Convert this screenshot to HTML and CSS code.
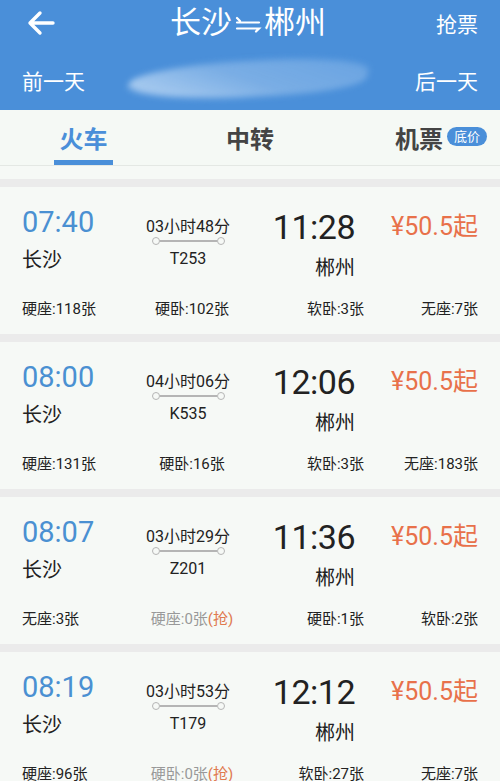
FILE: index.html
```html
<!DOCTYPE html>
<html>
  <head>
    <title>长沙-郴州</title>
    <link rel="stylesheet" href="styles.css">
  </head>
  <body>
    <div class="topbar">
      <div class="nav">
        <svg class="back" width="30" height="26" viewBox="0 0 30 26">
          <path d="M27 13H4M14 3L4 13l10 10" fill="none" stroke="#fff" stroke-width="3.4" stroke-linecap="round" stroke-linejoin="round"/>
        </svg>
        <div class="title">
          长沙<svg class="swap" width="28" height="20" viewBox="0 0 28 20"><path d="M6 6l-3-3M3 7.5h22M3 13.5h22l-3 3" fill="none" stroke="#fff" stroke-width="2.2" stroke-linecap="round"/></svg>郴州
        </div>
        <div class="nav-right">抢票</div>
      </div>
      <div class="dayrow">
        <span>前一天</span>
        <div class="smudge"></div>
        <span>后一天</span>
      </div>
    </div>

    <div class="tabs">
      <div class="tab active">火车</div>
      <div class="tab">中转</div>
      <div class="tab last">机票<span class="badge">底价</span></div>
    </div>

    <div class="list">
      <div class="card">
        <div class="main">
          <div class="dep">
            <div class="dep-time">07:40</div>
            <div class="station">长沙</div>
          </div>
          <div class="mid">
            <div class="dur">03小时48分</div>
            <div class="track"><i></i><b></b><i></i></div>
            <div class="code">T253</div>
          </div>
          <div class="arr">
            <div class="arr-time">11:28</div>
            <div class="station">郴州</div>
          </div>
          <div class="price">¥50.5起</div>
        </div>
        <div class="seats">
          <span>硬座:118张</span>
          <span>硬卧:102张</span>
          <span>软卧:3张</span>
          <span>无座:7张</span>
        </div>
      </div>

      <div class="card">
        <div class="main">
          <div class="dep">
            <div class="dep-time">08:00</div>
            <div class="station">长沙</div>
          </div>
          <div class="mid">
            <div class="dur">04小时06分</div>
            <div class="track"><i></i><b></b><i></i></div>
            <div class="code">K535</div>
          </div>
          <div class="arr">
            <div class="arr-time">12:06</div>
            <div class="station">郴州</div>
          </div>
          <div class="price">¥50.5起</div>
        </div>
        <div class="seats">
          <span>硬座:131张</span>
          <span>硬卧:16张</span>
          <span>软卧:3张</span>
          <span>无座:183张</span>
        </div>
      </div>

      <div class="card">
        <div class="main">
          <div class="dep">
            <div class="dep-time">08:07</div>
            <div class="station">长沙</div>
          </div>
          <div class="mid">
            <div class="dur">03小时29分</div>
            <div class="track"><i></i><b></b><i></i></div>
            <div class="code">Z201</div>
          </div>
          <div class="arr">
            <div class="arr-time">11:36</div>
            <div class="station">郴州</div>
          </div>
          <div class="price">¥50.5起</div>
        </div>
        <div class="seats">
          <span>无座:3张</span>
          <span class="none">硬座:0张<em>(抢)</em></span>
          <span>硬卧:1张</span>
          <span>软卧:2张</span>
        </div>
      </div>

      <div class="card">
        <div class="main">
          <div class="dep">
            <div class="dep-time">08:19</div>
            <div class="station">长沙</div>
          </div>
          <div class="mid">
            <div class="dur">03小时53分</div>
            <div class="track"><i></i><b></b><i></i></div>
            <div class="code">T179</div>
          </div>
          <div class="arr">
            <div class="arr-time">12:12</div>
            <div class="station">郴州</div>
          </div>
          <div class="price">¥50.5起</div>
        </div>
        <div class="seats">
          <span>硬座:96张</span>
          <span class="none">硬卧:0张<em>(抢)</em></span>
          <span>软卧:27张</span>
          <span>无座:7张</span>
        </div>
      </div>
    </div>
  </body>
</html>
```

FILE: styles.css
```css
body {
  margin: 0;
  font-family: Roboto, "Noto Sans CJK SC", sans-serif;
  background: #f6f9f6;
  color: #222;
  overflow: hidden;
}

/* header */
.topbar {
  background: #4a8fd9;
  color: #fff;
  height: 110px;
}
.nav {
  height: 46px;
  display: flex;
  align-items: center;
  justify-content: space-between;
  padding: 0 22px 0 26px;
}
.back {
  display: block;
}
.title {
  font-size: 31px;
  line-height: 40px;
  display: flex;
  align-items: center;
  margin-left: 4px;
}
.swap {
  margin: 4px 2px 0;
}
.nav-right {
  font-size: 21px;
}
.dayrow {
  height: 64px;
  display: flex;
  align-items: center;
  justify-content: space-between;
  padding: 0 22px;
  font-size: 21px;
}
.dayrow span {
  margin-top: 4px;
}
.smudge {
  width: 240px;
  height: 36px;
  margin: 2px 12px 0 8px;
  border-radius: 50% 45% 40% 55%;
  background: linear-gradient(20deg, rgba(220, 236, 252, 0.75), rgba(160, 198, 238, 0.55) 50%, rgba(140, 186, 236, 0.45));
  transform: rotate(-3deg) skewX(-12deg);
  filter: blur(3px);
}

/* tabs */
.tabs {
  display: grid;
  grid-template-columns: 167px 166px 167px;
  height: 55px;
  border-bottom: 1px solid #e4e8e4;
  background: #f5f9f5;
}
.tab {
  display: flex;
  align-items: center;
  justify-content: center;
  font-size: 24px;
  font-weight: bold;
  color: #444;
  position: relative;
}
.tab.active {
  color: #4a8fd9;
}
.tab.active::after {
  content: "";
  position: absolute;
  left: 54px;
  width: 59px;
  bottom: 0;
  height: 5px;
  background: #4a8fd9;
}
.tab.last {
  justify-content: flex-end;
  padding-right: 13px;
}
.badge {
  font-size: 13px;
  font-weight: normal;
  color: #fff;
  background: #4a8fd9;
  border-radius: 10px;
  padding: 0 7px;
  line-height: 19px;
  margin-left: 4px;
  margin-top: -2px;
}

/* list */
.list {
  padding-top: 13px;
}
.card {
  border-top: 8px solid #ebebeb;
  height: 147px;
  box-sizing: content-box;
  padding: 0 22px;
}
.main {
  display: grid;
  grid-template-columns: 100px 132px 101px 123px;
  padding-top: 17px;
}
.dep-time {
  font-size: 29px;
  line-height: 36px;
  color: #4a90d2;
}
.station {
  font-size: 20px;
  line-height: 28px;
  margin-top: 6px;
}
.mid {
  margin-top: 13px;
  display: flex;
  flex-direction: column;
  align-items: center;
}
.dur {
  font-size: 16px;
  line-height: 20px;
}
.track {
  display: flex;
  align-items: center;
  height: 10px;
  margin-top: -1px;
}
.track i {
  width: 6px;
  height: 6px;
  border: 1.5px solid #b5b5b5;
  border-radius: 50%;
}
.track b {
  width: 57px;
  height: 2px;
  background: #b5b5b5;
}
.code {
  font-size: 16px;
  line-height: 20px;
  margin-top: 3px;
}
.arr {
  margin-top: 3px;
  text-align: right;
}
.arr-time {
  font-size: 34px;
  line-height: 40px;
  letter-spacing: -0.5px;
}
.arr .station {
  margin-top: 7px;
}
.price {
  margin-top: 8px;
  text-align: right;
  font-size: 25px;
  line-height: 30px;
  color: #e8714a;
}
.seats {
  display: grid;
  grid-template-columns: 108px 124px 110px 114px;
  margin-top: 17px;
  font-size: 15px;
  line-height: 20px;
}
.seats span:nth-child(2) {
  text-align: center;
}
.seats span:nth-child(3),
.seats span:nth-child(4) {
  text-align: right;
}
.none {
  color: #999;
}
.none em {
  font-style: normal;
  color: #e07a50;
}
```
